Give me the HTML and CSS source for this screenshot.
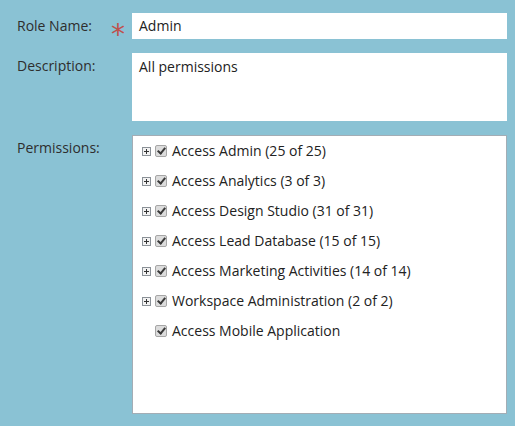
FILE: index.html
```html
<!DOCTYPE html>
<html>
<head>
<meta charset="utf-8">
<link rel="stylesheet" href="styles.css">
</head>
<body>
<div class="form">
  <div class="label"><span>Role Name:</span><span class="req">*</span></div>
  <div class="field input">Admin</div>

  <div class="label"><span>Description:</span></div>
  <div class="field textarea">All permissions</div>

  <div class="label"><span>Permissions:</span></div>
  <div class="field perms">
    <div class="item"><span class="exp"></span><span class="cb"></span><span class="txt">Access Admin (25 of 25)</span></div>
    <div class="item"><span class="exp"></span><span class="cb"></span><span class="txt">Access Analytics (3 of 3)</span></div>
    <div class="item"><span class="exp"></span><span class="cb"></span><span class="txt">Access Design Studio (31 of 31)</span></div>
    <div class="item"><span class="exp"></span><span class="cb"></span><span class="txt">Access Lead Database (15 of 15)</span></div>
    <div class="item"><span class="exp"></span><span class="cb"></span><span class="txt">Access Marketing Activities (14 of 14)</span></div>
    <div class="item"><span class="exp"></span><span class="cb"></span><span class="txt">Workspace Administration (2 of 2)</span></div>
    <div class="item"><span class="exp none"></span><span class="cb"></span><span class="txt">Access Mobile Application</span></div>
  </div>
</div>
</body>
</html>
```

FILE: styles.css
```css
html, body {
  margin: 0;
  padding: 0;
  background: #8ac2d4;
}
body {
  font-family: "Open Sans", "Liberation Sans", sans-serif;
  font-size: 14px;
  color: #333;
  height: 426px;
  overflow: hidden;
}
.form {
  display: grid;
  grid-template-columns: 132px 375px;
  grid-template-rows: 26px 68px 279px;
  row-gap: 14px;
  padding-top: 13px;
}
.label {
  display: flex;
  justify-content: space-between;
  align-items: flex-start;
  padding: 3px 7px 0 17px;
  line-height: 20px;
  color: #2e2e2e;
}
.req {
  color: #c0504d;
  font-size: 28px;
  line-height: 14px;
  height: 14px;
  margin-top: 12px;
  font-family: "DejaVu Sans", sans-serif;
}
.field {
  background: #fff;
  box-sizing: border-box;
  color: #222;
}
.input {
  padding: 3px 7px;
  line-height: 20px;
}
.textarea {
  padding: 4px 7px;
  line-height: 20px;
}
.perms {
  border: 1px solid #a3adb5;
  padding: 0 0 0 9px;
}
.item {
  display: flex;
  align-items: center;
  height: 30px;
}
.exp {
  width: 9px;
  height: 9px;
  box-sizing: border-box;
  border: 1px solid #8b9197;
  background: #f2f2f2;
  position: relative;
  margin-right: 4px;
}
.exp::before {
  content: "";
  position: absolute;
  left: 1px;
  top: 3px;
  width: 5px;
  height: 1px;
  background: #333;
}
.exp::after {
  content: "";
  position: absolute;
  left: 3px;
  top: 1px;
  width: 1px;
  height: 5px;
  background: #333;
}
.exp.none {
  border-color: transparent;
  background: transparent;
}
.exp.none::before, .exp.none::after { display: none; }
.cb {
  width: 12px;
  height: 12px;
  box-sizing: border-box;
  border: 1px solid #a6a6a6;
  border-radius: 2px;
  background: #dcdcdc;
  position: relative;
  margin-right: 5px;
}
.cb::after {
  content: "";
  position: absolute;
  left: 3px;
  top: 0px;
  width: 3px;
  height: 6px;
  border-right: 2px solid #3a3a3a;
  border-bottom: 2px solid #3a3a3a;
  transform: rotate(40deg);
}
.txt {
  line-height: 20px;
  color: #222;
}
```
